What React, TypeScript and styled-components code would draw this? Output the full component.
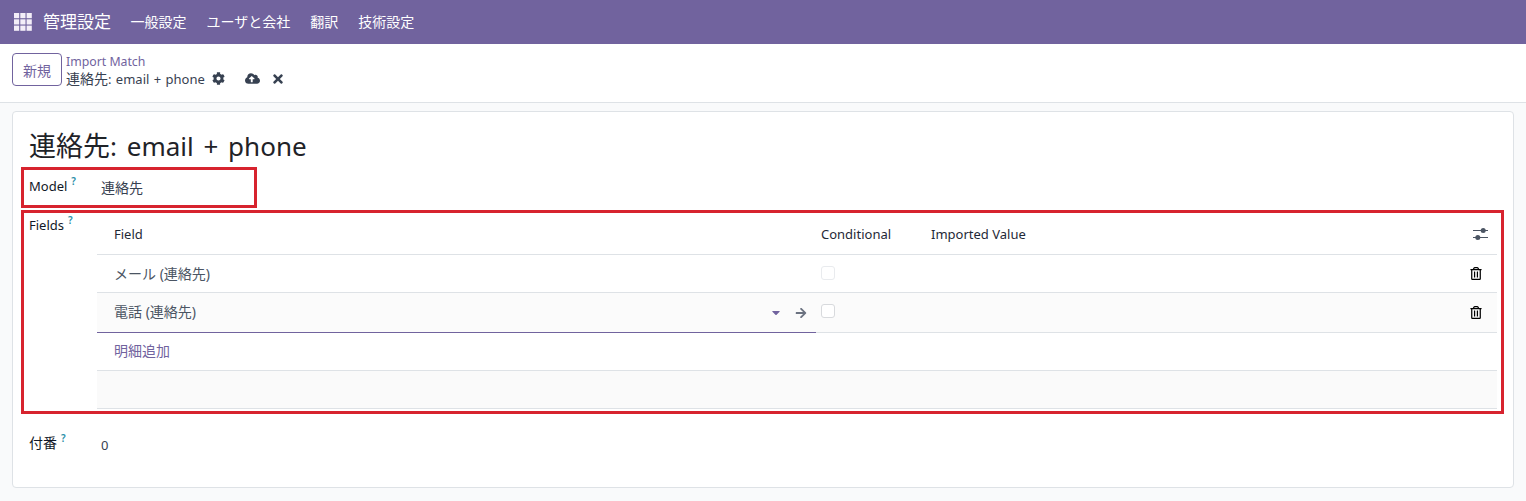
import React from 'react';
import styled, { createGlobalStyle } from 'styled-components';
import { FaCog, FaCloudUploadAlt, FaTimes, FaArrowRight, FaCaretDown, FaRegTrashAlt } from 'react-icons/fa';

const GlobalStyle = createGlobalStyle`
    html, body {
        margin: 0;
        padding: 0;
        background: #f9fafb;
        font-family: "Noto Sans", "Noto Sans CJK JP", sans-serif;
        font-size: 13px;
        color: #374151;
    }
`;

const Page = styled.div`
    position: relative;
    width: 1526px;
    height: 501px;
    overflow: hidden;
`;

// Japanese runs sit a little larger than the latin text around them
const Ja = styled.span`
    font-size: 1.077em;
`;

const NavBar = styled.nav`
    display: flex;
    align-items: center;
    height: 44px;
    background: #71639e;
    color: #fff;
    padding: 0 0 3px 14px;
    box-sizing: border-box;
`;

const AppsIcon = styled.svg`
    width: 18px;
    height: 18px;
    fill: #f3eef8;
    margin: 3px 11px 0 0;
`;

const AppName = styled.span`
    font-size: 17px;
    margin-right: 19.5px;
`;

const MenuItem = styled.span`
    font-size: 14px;
    margin-right: 20px;
`;

const ControlPanel = styled.div`
    display: flex;
    align-items: center;
    height: 59px;
    padding: 0 0 6px 12px;
    background: #fff;
    border-bottom: 1px solid #dee2e6;
    box-sizing: border-box;
`;

const NewButton = styled.button`
    width: 50px;
    height: 33px;
    margin: 0 4px 1px 0;
    padding: 0;
    background: #fff;
    border: 1px solid #71639e;
    border-radius: 4px;
    color: #71639e;
    font: inherit;
`;

const Breadcrumb = styled.div`
    display: flex;
    flex-direction: column;
    line-height: 17px;
`;

const ParentCrumb = styled.span`
    color: #71639e;
    font-size: 12.3px;
`;

const CurrentCrumb = styled.div`
    display: flex;
    align-items: center;
    color: #374151;
    white-space: pre;
    word-spacing: 1px;
`;

const CrumbIcon = styled.span<{ $left: number }>`
    display: inline-flex;
    margin-left: ${(p) => p.$left}px;
    font-size: 13px;
    color: #374151;
`;

const Content = styled.main`
    padding: 8px 12px 0;
`;

const Sheet = styled.section`
    height: 377px;
    padding: 16px 16px 0;
    background: #fff;
    border: 1px solid #dee2e6;
    border-radius: 4px;
    box-sizing: border-box;
`;

const Title = styled.h1`
    margin: 0 0 5px;
    font-size: 26px;
    font-weight: 400;
    line-height: 36px;
    color: #1f2328;
    word-spacing: 3px;
`;

const TitleJa = styled.span`
    font-size: 27px;
`;

const FieldRow = styled.div<{ $height: number }>`
    display: flex;
    height: ${(p) => p.$height}px;
`;

const Label = styled.label<{ $top: number }>`
    flex: 0 0 68px;
    padding-top: ${(p) => p.$top}px;
    color: #111827;
    line-height: 18px;
    box-sizing: border-box;
`;

const Help = styled.sup`
    color: #2a8ea8;
    font-size: 10px;
    font-weight: 600;
    margin-left: 4px;
    vertical-align: 6px;
    line-height: 0;
`;

const Value = styled.span<{ $top: number }>`
    padding: ${(p) => p.$top}px 0 0 4px;
    line-height: 18px;
`;

const Table = styled.div`
    flex: 1;
    margin-right: 0;
`;

const gridColumns = '719px 110px 1fr 42px';

const Row = styled.div<{ $height: number; $shade?: boolean }>`
    display: grid;
    grid-template-columns: ${gridColumns};
    align-items: center;
    height: ${(p) => p.$height}px;
    box-sizing: border-box;
    border-bottom: 1px solid #dee2e6;
    background: ${(p) => (p.$shade ? '#fbfbfb' : '#fff')};
`;

const HeadCell = styled.span<{ $pad: number }>`
    padding-left: ${(p) => p.$pad}px;
    color: #1f2937;
`;

const FieldCell = styled.span`
    padding: 0 0 2px 17px;
    color: #4b5563;
`;

const EditCell = styled.div`
    display: flex;
    align-items: center;
    height: 100%;
    padding: 0 9px 0 17px;
    border-bottom: 1px solid #71639e;
    box-sizing: content-box;
    margin-bottom: -1px;
    width: 693px;
    color: #4b5563;
`;

const EditText = styled.span`
    flex: 1;
    padding-bottom: 4px;
`;

const Caret = styled(FaCaretDown)`
    width: 8px;
    height: 13px;
    color: #71639e;
    margin-right: 15px;
`;

const Arrow = styled(FaArrowRight)`
    width: 12px;
    height: 12px;
    color: #6b7280;
`;

const Check = styled.span<{ $strong?: boolean }>`
    display: block;
    width: 12px;
    height: 12px;
    margin: 0 0 ${(p) => (p.$strong ? 3 : 1)}px 5px;
    border: 1px solid ${(p) => (p.$strong ? '#d8dadd' : '#e9ebee')};
    border-radius: 3px;
    background: #fff;
`;

const Trash = styled(FaRegTrashAlt)`
    display: block;
    width: 12px;
    height: 13px;
    margin-left: 15px;
    color: #000;
`;

const Sliders = styled.svg`
    display: block;
    width: 15px;
    height: 14px;
    margin-left: 18px;
`;

const AddLine = styled.div`
    display: flex;
    align-items: center;
    height: 38px;
    padding: 0 0 4px 17px;
    border-bottom: 1px solid #dee2e6;
    box-sizing: border-box;
    color: #71639e;
`;

const EmptyLine = styled.div`
    height: 38px;
    background: #fafafa;
    border-bottom: 1px solid #dee2e6;
    box-sizing: border-box;
`;

const Annotation = styled.div<{ $x: number; $y: number; $w: number; $h: number }>`
    position: absolute;
    left: ${(p) => p.$x}px;
    top: ${(p) => p.$y}px;
    width: ${(p) => p.$w}px;
    height: ${(p) => p.$h}px;
    border: 3px solid #d7232e;
    box-sizing: border-box;
    pointer-events: none;
`;

const menus = ['一般設定', 'ユーザと会社', '翻訳', '技術設定'];

const App: React.FunctionComponent = () => {
    return (
        <Page>
            <GlobalStyle />
            <NavBar>
                <AppsIcon viewBox="0 0 18 18">
                    {[0, 6.3, 12.6].map((y) =>
                        [0, 6.3, 12.6].map((x) => <rect key={`${x}-${y}`} x={x} y={y} width="5.2" height="5.2" />)
                    )}
                </AppsIcon>
                <AppName>管理設定</AppName>
                {menus.map((m) => (
                    <MenuItem key={m}>{m}</MenuItem>
                ))}
            </NavBar>
            <ControlPanel>
                <NewButton><Ja>新規</Ja></NewButton>
                <Breadcrumb>
                    <ParentCrumb>Import Match</ParentCrumb>
                    <CurrentCrumb>
                        <span><Ja>連絡先</Ja>: email + phone</span>
                        <CrumbIcon $left={7}><FaCog /></CrumbIcon>
                        <CrumbIcon $left={20}><FaCloudUploadAlt size={15} /></CrumbIcon>
                        <CrumbIcon $left={11}><FaTimes size={14} /></CrumbIcon>
                    </CurrentCrumb>
                </Breadcrumb>
            </ControlPanel>
            <Content>
                <Sheet>
                    <Title><TitleJa>連絡先</TitleJa>: email + phone</Title>
                    <FieldRow $height={45}>
                        <Label $top={8}>Model<Help>?</Help></Label>
                        <Value $top={10}><Ja>連絡先</Ja></Value>
                    </FieldRow>
                    <FieldRow $height={220}>
                        <Label $top={2}>Fields<Help>?</Help></Label>
                        <Table>
                            <Row $height={41}>
                                <HeadCell $pad={17}>Field</HeadCell>
                                <HeadCell $pad={5}>Conditional</HeadCell>
                                <HeadCell $pad={5}>Imported Value</HeadCell>
                                <Sliders viewBox="0 0 15 14">
                                    <path d="M0 3.5h15M0 10.5h15" stroke="#4b5563" strokeWidth="1" />
                                    <circle cx="10.2" cy="3.5" r="2.5" fill="#4b5563" />
                                    <circle cx="4.8" cy="10.5" r="2.5" fill="#4b5563" />
                                </Sliders>
                            </Row>
                            <Row $height={38}>
                                <FieldCell><Ja>メール (連絡先)</Ja></FieldCell>
                                <Check />
                                <span />
                                <Trash />
                            </Row>
                            <Row $height={40} $shade>
                                <EditCell>
                                    <EditText><Ja>電話 (連絡先)</Ja></EditText>
                                    <Caret />
                                    <Arrow />
                                </EditCell>
                                <Check $strong />
                                <span />
                                <Trash />
                            </Row>
                            <AddLine><Ja>明細追加</Ja></AddLine>
                            <EmptyLine />
                        </Table>
                    </FieldRow>
                    <FieldRow $height={30}>
                        <Label $top={0}><Ja>付番</Ja><Help>?</Help></Label>
                        <Value $top={2}>0</Value>
                    </FieldRow>
                </Sheet>
            </Content>
            <Annotation $x={21} $y={167} $w={236} $h={41} />
            <Annotation $x={21} $y={210} $w={1483} $h={204} />
        </Page>
    );
};

export default App;
